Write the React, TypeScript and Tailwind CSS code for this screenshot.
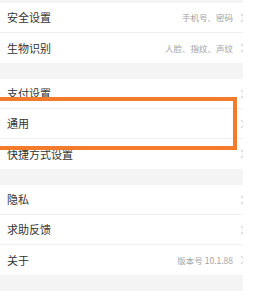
import React from 'react';

type Row = { label: string; value?: string };

const sections: Row[][] = [
  [
    { label: '安全设置', value: '手机号、密码' },
    { label: '生物识别', value: '人脸、指纹、声纹' },
  ],
  [{ label: '支付设置' }, { label: '通用' }, { label: '快捷方式设置' }],
  [{ label: '隐私' }, { label: '求助反馈' }, { label: '关于', value: '版本号 10.1.88' }],
  [{ label: '清除缓存' }],
];

function Chevron() {
  return (
    <svg width="6" height="10" viewBox="0 0 6 10" className="shrink-0">
      <path d="M1 1l4 4-4 4" fill="none" stroke="#d4d4d4" strokeWidth="1.2" />
    </svg>
  );
}

function SettingRow({ row, last }: { row: Row; last: boolean }) {
  return (
    <div
      className={`flex h-[30px] items-center bg-white pl-[7px] ${last ? '' : 'border-b border-[#f0f0f0]'}`}
    >
      <span className="flex-1 text-[11px] text-[#333]">{row.label}</span>
      {row.value && <span className="text-[8.5px] text-[#a3a3a3]">{row.value}</span>}
      <div className="ml-[7px] w-[3px] overflow-hidden">
        <Chevron />
      </div>
    </div>
  );
}

export default function App() {
  return (
    <div
      className="relative h-[300px] w-[258px] overflow-hidden bg-white"
      style={{ fontFamily: '"Noto Sans CJK SC", "Noto Sans", sans-serif' }}
    >
      <div className="w-[243px] bg-[#f4f4f4] pt-[3px]">
        {sections.map((rows, i) => (
          <div key={i} className={i > 0 ? 'mt-[16px]' : ''}>
            {rows.map((row, j) => (
              <SettingRow key={row.label} row={row} last={j === rows.length - 1} />
            ))}
          </div>
        ))}
      </div>
      {/* highlight box */}
      <div className="absolute left-[-4px] top-[97px] h-[53px] w-[241px] border-4 border-[#f37b2b]" />
    </div>
  );
}
